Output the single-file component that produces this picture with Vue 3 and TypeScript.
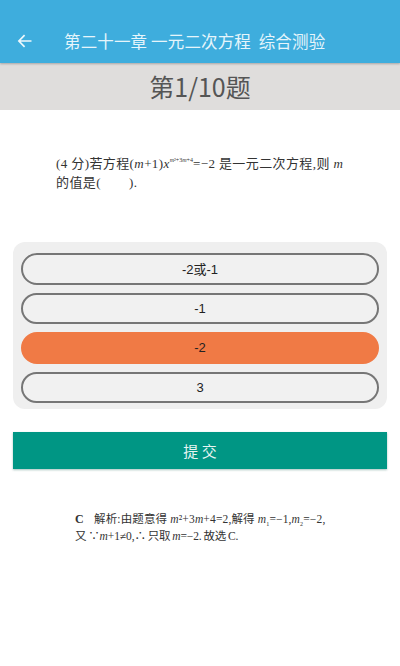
<script setup lang="ts">
import { ref } from 'vue'

const options = ['-2或-1', '-1', '-2', '3']
const selected = ref(2)
</script>

<template>
  <div class="page">
    <header class="appbar">
      <button class="back" aria-label="返回">
        <svg width="16" height="14" viewBox="0 0 16 14" fill="none" stroke="#eef8fc" stroke-width="1.7">
          <path d="M14.5 7H2M7.6 1.2L1.9 7l5.7 5.8" />
        </svg>
      </button>
      <h1 class="title">第二十一章 一元二次方程&nbsp;&nbsp;综合测验</h1>
    </header>
    <div class="counter">第1/10题</div>

    <section class="question">
      <p class="line">(4 分)若方程(<i>m</i>+1)<i>x</i><sup class="exp"><i>m</i>²+3<i>m</i>+4</sup>=−2 是一元二次方程,则 <i>m</i></p>
      <p class="line">的值是(<span class="blank"></span>).</p>
    </section>

    <section class="panel">
      <button
        v-for="(opt, i) in options"
        :key="opt"
        class="option"
        :class="{ active: selected === i }"
        @click="selected = i"
      >{{ opt }}</button>
    </section>

    <button class="submit">提 交</button>

    <section class="analysis">
      <p class="line small"><b class="answer">C</b>解析:由题意得 <i>m</i>²+3<i>m</i>+4=2,解得 <i>m</i><sub class="idx">1</sub>=−1,<i>m</i><sub class="idx">2</sub>=−2,</p>
      <p class="line small tight">又 ∵<i>m</i>+1≠0,∴ 只取 <i>m</i>=−2. 故选 C.</p>
    </section>
  </div>
</template>

<style>
html, body { margin: 0; background: #fff; }
</style>

<style scoped>
.page {
  width: 400px;
  height: 666px;
  overflow: hidden;
  background: #fff;
  font-family: "Noto Sans CJK SC", "Noto Sans", sans-serif;
}
.appbar {
  position: relative;
  z-index: 1;
  height: 63px;
  box-sizing: border-box;
  padding-top: 18px;
  display: flex;
  align-items: center;
  background: #3eaddd;
  box-shadow: 0 1px 2px rgba(0, 0, 0, 0.25);
}
.back {
  width: 64px;
  padding: 0 0 0 17px;
  border: 0;
  background: none;
  display: flex;
}
.title {
  margin: 0;
  font-size: 16.5px;
  line-height: 20px;
  font-weight: 400;
  letter-spacing: 0.15px;
  color: #e6f5fb;
  white-space: nowrap;
}
.counter {
  height: 47px;
  line-height: 46px;
  text-align: center;
  font-size: 25px;
  color: #555;
  background: #dfdddc;
}
.question {
  padding: 44px 56px 0;
  height: 132px;
  box-sizing: border-box;
  font-family: "Liberation Serif", "Noto Sans CJK SC", serif;
  color: #333;
}
.line {
  margin: 0;
  font-size: 13px;
  line-height: 19px;
  letter-spacing: 0.4px;
  white-space: nowrap;
}
.exp {
  font-size: 6px;
  line-height: 0;
  vertical-align: 6px;
  letter-spacing: 0;
}
.blank {
  display: inline-block;
  width: 28px;
}
.panel {
  margin: 0 13px;
  height: 167px;
  box-sizing: border-box;
  padding: 11px 8px 0;
  display: flex;
  flex-direction: column;
  gap: 8px;
  background: #efefef;
  border-radius: 12px;
}
.option {
  height: 31.5px;
  box-sizing: border-box;
  flex: none;
  border: 2px solid #767676;
  border-radius: 16px;
  background: #f1f1f1;
  font-family: "Liberation Sans", "Noto Sans CJK SC", sans-serif;
  font-size: 13px;
  color: #222;
  padding: 0;
}
.option.active {
  border-color: #f07a45;
  background: #f07a45;
}
.submit {
  display: block;
  width: 374px;
  height: 37px;
  margin: 23px 13px 0;
  border: 0;
  background: #009684;
  color: #e6f5f2;
  font-family: "Noto Sans CJK SC", sans-serif;
  font-size: 15px;
  box-shadow: 0 1px 2px rgba(0, 80, 70, 0.35);
}
.analysis {
  padding: 42px 0 0 75px;
  font-family: "Liberation Serif", "Noto Sans CJK SC", serif;
  color: #333;
}
.small {
  font-size: 11.5px;
  line-height: 17px;
  letter-spacing: 0.15px;
}
.tight {
  letter-spacing: -0.1px;
  word-spacing: -1px;
}
.answer {
  display: inline-block;
  width: 19px;
  font-size: 12px;
}
.idx {
  font-size: 6px;
  line-height: 0;
}
</style>
